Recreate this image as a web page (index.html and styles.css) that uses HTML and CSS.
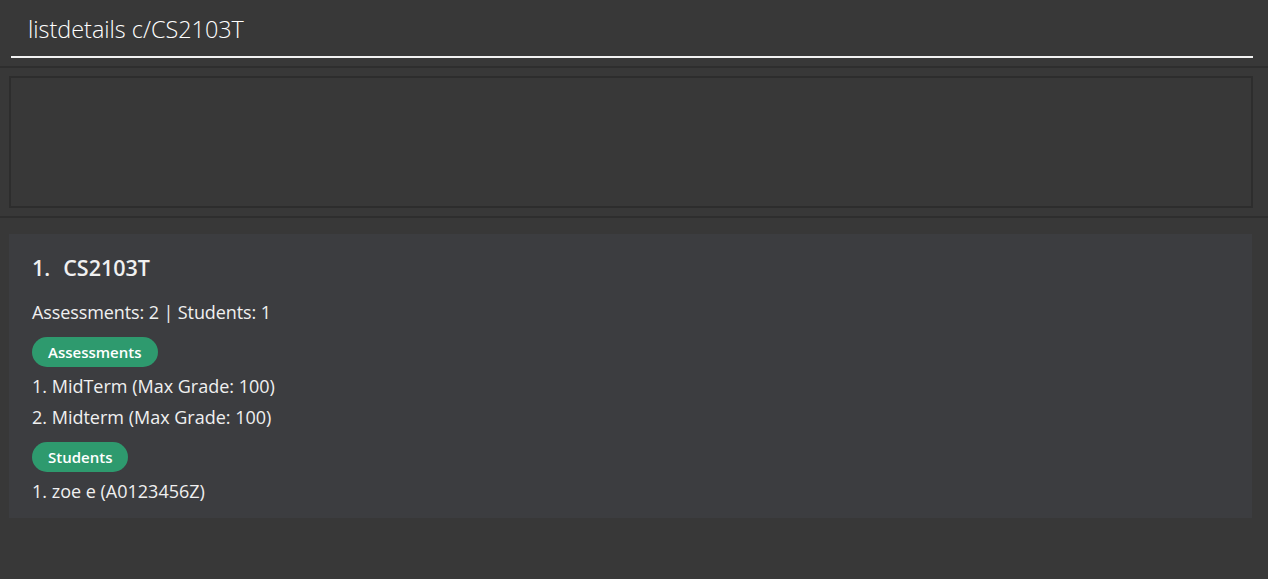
FILE: index.html
```html
<!DOCTYPE html>
<html>
<head>
<meta charset="utf-8">
<link rel="stylesheet" href="styles.css">
</head>
<body>
<div class="app">
  <div class="command-box">
    <div class="command-input">listdetails c/CS2103T</div>
  </div>
  <div class="result-pane">
    <div class="result-box"></div>
  </div>
  <div class="list-pane">
    <div class="card">
      <div class="card-title"><span class="idx">1.</span>CS2103T</div>
      <div class="card-line summary">Assessments: 2 | Students: 1</div>
      <div class="pill">Assessments</div>
      <div class="card-line">1. MidTerm (Max Grade: 100)</div>
      <div class="card-line">2. Midterm (Max Grade: 100)</div>
      <div class="pill pill-next">Students</div>
      <div class="card-line last">1. zoe e (A0123456Z)</div>
    </div>
  </div>
</div>
</body>
</html>
```

FILE: styles.css
```css
* { box-sizing: border-box; }
html, body {
  margin: 0;
  padding: 0;
  background: #383838;
  font-family: "Open Sans", "Noto Sans", sans-serif;
  color: #f0f0f0;
}
.app {
  width: 1268px;
  height: 579px;
  display: flex;
  flex-direction: column;
}
.command-box {
  height: 68px;
  padding: 0 15px 0 11px;
  border-bottom: 2px solid #2e2e2e;
}
.command-input {
  height: 58px;
  padding: 14px 0 0 17px;
  font-size: 23.4px;
  font-weight: 300;
  line-height: 30px;
  color: #ffffff;
  border-bottom: 2px solid #f2f2f2;
}
.result-pane {
  height: 150px;
  padding: 8px 15px 8px 9px;
  border-bottom: 2px solid #2e2e2e;
}
.result-box {
  height: 132px;
  border: 2px solid #2d2d2d;
  background: #383838;
}
.list-pane {
  padding: 16px 16px 0 9px;
}
.card {
  background: #3c3d40;
  padding: 20px 23px 15px;
  display: flex;
  flex-direction: column;
  align-items: flex-start;
}
.card-title {
  font-size: 21.5px;
  font-weight: 600;
  line-height: 28px;
  margin-bottom: 18px;
}
.idx { margin-right: 13px; }
.card-line {
  font-size: 18px;
  line-height: 24px;
  margin-bottom: 7px;
}
.card-line.summary { margin-bottom: 13px; letter-spacing: -0.1px; }
.card-line.item { letter-spacing: 0.2px; }
.card-line.last { margin-bottom: 0; }
.pill {
  background: #2e9a6e;
  color: #ffffff;
  font-size: 15px;
  font-weight: 600;
  line-height: 30px;
  height: 30px;
  padding: 0 16px;
  border-radius: 15px;
  margin-bottom: 7px;
}
.pill.pill-next { margin-top: 6px; }
```
